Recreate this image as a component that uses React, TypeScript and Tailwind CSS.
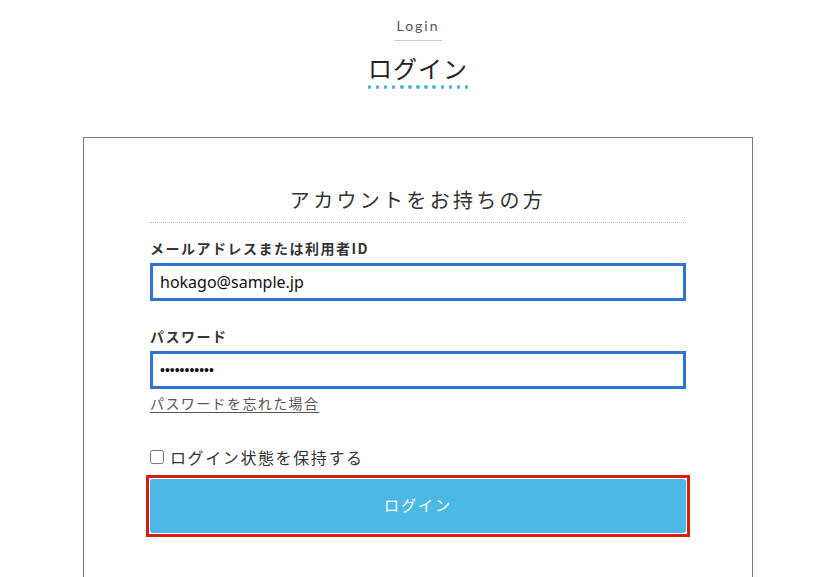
import { useState } from 'react';

const jp = "font-['Noto_Sans_CJK_JP','Noto_Sans',sans-serif]";

export default function App() {
  const [keep, setKeep] = useState(false);

  return (
    <div className={`w-[836px] bg-white text-[#333] ${jp}`}>
      {/* Page title */}
      <div className="flex flex-col items-center pt-[16px]">
        <span className="px-[2px] pb-[4px] border-b border-[#cccccc] text-[14px] leading-[20px] tracking-[2px] text-[#555] font-['Lato','Noto_Sans',sans-serif]">
          Login
        </span>
        <h1 className="mt-[11px] text-[24px] leading-[32px] tracking-[1px] text-[#222]">ログイン</h1>
        <div className="mt-[1px] flex gap-[4.6px]">
          {Array.from({ length: 13 }).map((_, i) => (
            <span key={i} className="w-[3.5px] h-[3.5px] rounded-full bg-[#40b6ee]" />
          ))}
        </div>
      </div>

      {/* Card */}
      <div className="mx-auto mt-[48px] w-[670px] border border-[#7a7a7a] px-[66px] pt-[48px] pb-[80px]">
        <h2 className="text-center text-[20px] leading-[28px] tracking-[3.3px] text-[#333] pb-[8px] border-b border-dotted border-[#bbbbbb]">
          アカウントをお持ちの方
        </h2>

        <label className="block mt-[15px] text-[14px] leading-[20px] tracking-[1.5px] font-bold text-[#333]">
          メールアドレスまたは利用者ID
        </label>
        <input
          type="text"
          defaultValue="hokago@sample.jp"
          className="mt-[5px] block w-full h-[38px] border-[3px] border-[#2f74cf] px-[7px] text-[16px] text-[#111] font-['Noto_Sans',sans-serif] outline-none"
        />

        <label className="block mt-[25px] text-[14px] leading-[20px] tracking-[1.5px] font-bold text-[#333]">
          パスワード
        </label>
        <input
          type="text"
          readOnly
          value="•••••••••••"
          className="mt-[5px] block w-full h-[38px] border-[3px] border-[#2f74cf] px-[7px] text-[14px] text-[#111] font-['Liberation_Sans',sans-serif] outline-none"
        />

        <a href="#" className="inline-block mt-[4px] text-[14px] leading-[20px] tracking-[1.4px] text-[#555] underline underline-offset-[3px]">
          パスワードを忘れた場合
        </a>

        <label className="mt-[31px] flex items-center gap-[6px] text-[16px] leading-[24px] tracking-[1.6px] text-[#333]">
          <input
            type="checkbox"
            checked={keep}
            onChange={() => setKeep(!keep)}
            className="w-[14px] h-[14px] m-0"
          />
          ログイン状態を保持する
        </label>

        {/* highlighted submit */}
        <div className="mt-[6px] -mx-[4px] border-[3px] border-[#d3200f] p-[1px]">
          <button className="block w-full h-[54px] rounded-[3px] bg-[#4bb8e6] text-white text-[15px] tracking-[2px]">
            ログイン
          </button>
        </div>
      </div>
    </div>
  );
}
